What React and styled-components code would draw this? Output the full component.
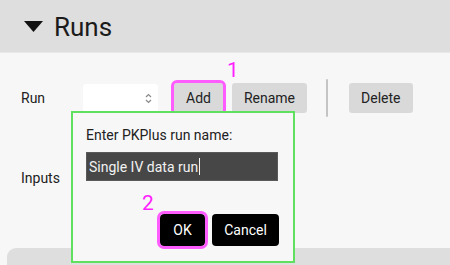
import React from "react";
import styled, { createGlobalStyle, css } from "styled-components";

const Global = createGlobalStyle`
  html, body { margin: 0; padding: 0; background: #f7f7f7; overflow: hidden; }
  body { font-family: Roboto, "Liberation Sans", Arial, sans-serif; color: #222; }
  * { box-sizing: border-box; }
`;

const Page = styled.div`
  position: relative;
  width: 450px;
  height: 265px;
  background: #f7f7f7;
  overflow: hidden;
`;

const Header = styled.div`
  height: 53px;
  background: #dedede;
  border-bottom: 1px solid #e9e9e9;
  display: flex;
  align-items: center;
  padding-left: 24px;
  gap: 11px;
`;

const Title = styled.h2`
  margin: 0;
  font-size: 26px;
  font-weight: 400;
  color: #1b1b1b;
  line-height: 1;
  padding-top: 1px;
`;

const Section = styled.div`
  padding: 31px 0 0 21px;
  display: flex;
  flex-direction: column;
  gap: 52px;
`;

const Row = styled.div`
  display: flex;
  align-items: center;
  height: 28px;
`;

const Label = styled.span`
  width: 62px;
  font-size: 14px;
  color: #222;
`;

const Spinner = styled.div`
  width: 75px;
  height: 28px;
  background: #fff;
  border-radius: 3px;
  display: flex;
  align-items: center;
  justify-content: flex-end;
  padding-right: 6px;
  margin-right: 16px;
`;

const Btn = styled.button`
  height: 30px;
  padding: 0 12px;
  border: none;
  border-radius: 3px;
  background: #d9d9d9;
  font-family: Roboto, "Liberation Sans", Arial, sans-serif;
  font-size: 14px;
  color: #222;
  margin-right: ${(p) => p.$mr || 0}px;
  ${(p) => p.$w && css`width: ${p.$w}px;`}
  ${(p) =>
    p.$dark &&
    css`
      background: #000;
      color: #fff;
      height: 32px;
      border-radius: 4px;
    `}
  ${(p) =>
    p.$hl &&
    css`
      outline: 3px solid #ff5cff;
      outline-offset: 0px;
    `}
`;

const Sep = styled.div`
  width: 2px;
  height: 38px;
  background: #c4c4c4;
  border-radius: 1px;
  margin-right: 21px;
`;

const Bottom = styled.div`
  margin: 56px 0 0 7px;
  height: 60px;
  background: #dedede;
  border-top-left-radius: 9px;
`;

const Dialog = styled.div`
  position: absolute;
  left: 71px;
  top: 111px;
  width: 224px;
  height: 152px;
  border: 2px solid #5fe05f;
  background: #f7f7f7;
  padding: 14px 14px 0 13px;
  display: flex;
  flex-direction: column;
`;

const Prompt = styled.div`
  font-size: 14px;
  line-height: 16px;
  color: #222;
`;

const NameInput = styled.div`
  margin-top: 9px;
  width: 192px;
  height: 29px;
  background: #474747;
  border: 1px solid #5a5a5a;
  color: #f2f2f2;
  font-size: 14px;
  display: flex;
  align-items: center;
  padding-left: 2px;
`;

const Caret = styled.span`
  display: inline-block;
  width: 1px;
  height: 17px;
  background: #f2f2f2;
  margin-left: 1px;
`;

const Actions = styled.div`
  margin-top: 33px;
  width: 193px;
  display: flex;
  justify-content: flex-end;
  gap: 7px;
`;

const Marker = styled.span`
  position: absolute;
  left: ${(p) => p.$x}px;
  top: ${(p) => p.$y}px;
  font-size: 21px;
  line-height: 1;
  color: #ff1fff;
`;

export default function App() {
  return (
    <Page>
      <Global />
      <Header>
        <svg width="19" height="11" viewBox="0 0 19 11">
          <path d="M0 0 H19 L9.5 11 Z" fill="#111" />
        </svg>
        <Title>Runs</Title>
      </Header>
      <Section>
        <Row>
          <Label>Run</Label>
          <Spinner>
            <svg width="7" height="11" viewBox="0 0 7 11">
              <path d="M1 4 L3.5 1.5 L6 4" stroke="#8a8a8a" strokeWidth="1.2" fill="none" />
              <path d="M1 7 L3.5 9.5 L6 7" stroke="#8a8a8a" strokeWidth="1.2" fill="none" />
            </svg>
          </Spinner>
          <Btn $hl $mr={9}>Add</Btn>
          <Btn $mr={19}>Rename</Btn>
          <Sep />
          <Btn>Delete</Btn>
        </Row>
        <Row>
          <Label>Inputs</Label>
        </Row>
      </Section>
      <Bottom />
      <Dialog>
        <Prompt>Enter PKPlus run name:</Prompt>
        <NameInput>
          Single IV data run<Caret />
        </NameInput>
        <Actions>
          <Btn $dark $hl $w={45}>OK</Btn>
          <Btn $dark $w={67}>Cancel</Btn>
        </Actions>
      </Dialog>
      <Marker $x={227} $y={60}>1</Marker>
      <Marker $x={142} $y={193}>2</Marker>
    </Page>
  );
}
